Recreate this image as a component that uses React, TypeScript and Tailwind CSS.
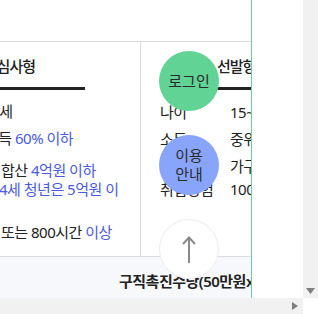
import React from 'react';

const BLUE = 'text-[#4a5be2]';

function FloatingButtons() {
  return (
    <div className="absolute left-[159px] top-[51px] flex flex-col gap-[24px]">
      <button className="w-[60px] h-[60px] rounded-full bg-[#61d394] text-[15px] leading-[19px] text-[#2a2a2a] flex items-center justify-center">
        로그인
      </button>
      <button className="w-[60px] h-[60px] rounded-full bg-[#89a5fb] text-[15px] leading-[19px] text-[#2a2a2a] flex flex-col items-center justify-center">
        <span>이용</span>
        <span>안내</span>
      </button>
      <button className="w-[60px] h-[60px] rounded-full bg-white border border-[#ececec] flex items-center justify-center">
        <svg width="14" height="27" viewBox="0 0 14 27" fill="none" stroke="#8a8a8a" strokeWidth="2">
          <path d="M7 1.5V27" />
          <path d="M1 8L7 1.5L13 8" />
        </svg>
      </button>
    </div>
  );
}

export default function App() {
  return (
    <div
      className="relative w-[318px] h-[314px] bg-white overflow-hidden text-[#222]"
      style={{ fontFamily: '"Noto Sans", "Noto Sans CJK KR", sans-serif' }}
    >
      <div className="flex h-[298px]">
        {/* content viewport */}
        <div className="w-[252px] border-r border-[#66d19c] overflow-hidden flex flex-col">
          <div className="h-[41px] shrink-0" />

          <div className="flex h-[216px] shrink-0 border-y border-[#dcdcdc] text-[15px] leading-[19px] tracking-[-0.5px]">
            {/* 요건심사형 (scrolled partly out of view) */}
            <div className="w-[141px] shrink-0 border-r border-[#dcdcdc] overflow-hidden whitespace-nowrap">
              <div className="pt-[14px] text-[15px] leading-[20px] font-medium tracking-[-1px]">
                <span className="ml-[-29px]">요건심사형</span>
              </div>
              <div className="mt-[11px] h-[3px] w-[85px] bg-[#222]" />
              <div className="mt-[12px] ml-[-17px]">69세</div>
              <div className="mt-[8px] ml-[-15px]">
                소득 <span className={BLUE}>60% 이하</span>
              </div>
              <div className="mt-[13px] pl-[1px]">
                합산 <span className={BLUE}>4억원 이하</span>
              </div>
              <div className={`ml-[-1px] ${BLUE}`}>4세 청년은 5억원 이</div>
              <div className="mt-[24px] pl-[1px]">
                또는 800시간 <span className={BLUE}>이상</span>
              </div>
            </div>

            {/* 선발형 */}
            <div className="flex-1 overflow-hidden whitespace-nowrap">
              <div className="pt-[14px] pl-[76px] text-[15px] leading-[20px] font-medium tracking-[-1px]">
                선발형
              </div>
              <div className="mt-[11px] ml-[76px] h-[3px] w-[120px] bg-[#222]" />
              <div className="pl-[19px]">
                <div className="mt-[13px] flex">
                  <span className="w-[70px] shrink-0">나이</span>
                  <span>15~34세</span>
                </div>
                <div className="mt-[8px] flex">
                  <span className="w-[70px] shrink-0">소득</span>
                  <span>중위소득 120% 이하</span>
                </div>
                <div className="mt-[8px] flex">
                  <span className="w-[70px] shrink-0">재산</span>
                  <span>가구원 합산 4억원 이하</span>
                </div>
                <div className="mt-[4px] flex">
                  <span className="w-[70px] shrink-0">취업경험</span>
                  <span>100일 또는 800시간 미만</span>
                </div>
              </div>
            </div>
          </div>

          <div className="flex-1 bg-[#f7f8fc] pt-[14px] pl-[119px] whitespace-nowrap">
            <span className="block text-[15px] leading-[20px] font-semibold tracking-[-0.5px] text-[#222]">
              구직촉진수당(50만원x6개월)
            </span>
          </div>
        </div>

        <div className="w-[51px] bg-white" />

        {/* vertical scrollbar */}
        <div className="w-[15px] bg-[#f1f1f1] flex flex-col justify-end items-center pb-[4px]">
          <svg width="9" height="6" viewBox="0 0 9 6">
            <path d="M0 0H9L4.5 6Z" fill="#7f7f7f" />
          </svg>
        </div>
      </div>

      {/* horizontal scrollbar */}
      <div className="flex h-[16px]">
        <div className="w-[303px] bg-[#f1f1f1] flex items-center justify-end pr-[5px]">
          <svg width="6" height="8" viewBox="0 0 6 8">
            <path d="M0 0L6 4L0 8Z" fill="#7f7f7f" />
          </svg>
        </div>
        <div className="flex-1 bg-white" />
      </div>

      <FloatingButtons />
    </div>
  );
}
